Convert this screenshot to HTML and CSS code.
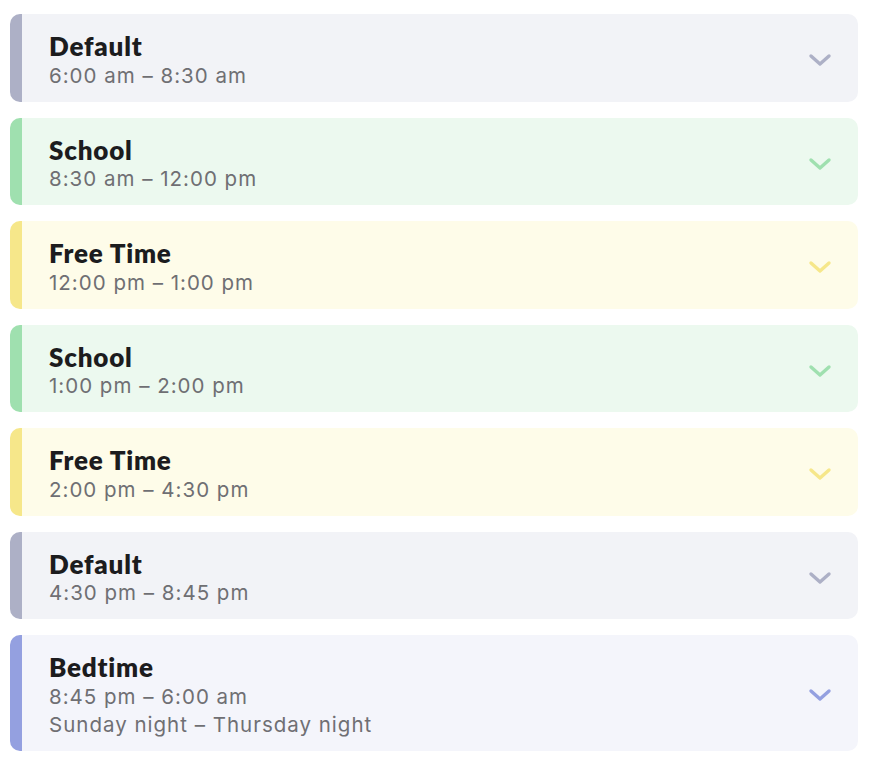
FILE: index.html
```html
<!DOCTYPE html>
<html lang="en">
<head>
  <meta charset="UTF-8">
  <meta name="viewport" content="width=device-width, initial-scale=1.0">
  <title>Schedule</title>
  <link rel="stylesheet" href="styles.css">
</head>
<body>
  <div class="schedule">
    <div class="block default">
      <div class="info">
        <div class="title">Default</div>
        <div class="time">6:00 am – 8:30 am</div>
      </div>
      <svg class="chevron" viewBox="0 0 24 14"><path d="M3 3 L12 11 L21 3"/></svg>
    </div>
    <div class="block school">
      <div class="info">
        <div class="title">School</div>
        <div class="time">8:30 am – 12:00 pm</div>
      </div>
      <svg class="chevron" viewBox="0 0 24 14"><path d="M3 3 L12 11 L21 3"/></svg>
    </div>
    <div class="block free">
      <div class="info">
        <div class="title">Free Time</div>
        <div class="time">12:00 pm – 1:00 pm</div>
      </div>
      <svg class="chevron" viewBox="0 0 24 14"><path d="M3 3 L12 11 L21 3"/></svg>
    </div>
    <div class="block school">
      <div class="info">
        <div class="title">School</div>
        <div class="time">1:00 pm – 2:00 pm</div>
      </div>
      <svg class="chevron" viewBox="0 0 24 14"><path d="M3 3 L12 11 L21 3"/></svg>
    </div>
    <div class="block free">
      <div class="info">
        <div class="title">Free Time</div>
        <div class="time">2:00 pm – 4:30 pm</div>
      </div>
      <svg class="chevron" viewBox="0 0 24 14"><path d="M3 3 L12 11 L21 3"/></svg>
    </div>
    <div class="block default">
      <div class="info">
        <div class="title">Default</div>
        <div class="time">4:30 pm – 8:45 pm</div>
      </div>
      <svg class="chevron" viewBox="0 0 24 14"><path d="M3 3 L12 11 L21 3"/></svg>
    </div>
    <div class="block bedtime">
      <div class="info">
        <div class="title">Bedtime</div>
        <div class="time">8:45 pm – 6:00 am</div>
        <div class="time">Sunday night – Thursday night</div>
      </div>
      <svg class="chevron" viewBox="0 0 24 14"><path d="M3 3 L12 11 L21 3"/></svg>
    </div>
  </div>
</body>
</html>
```

FILE: styles.css
```css
body {
  margin: 0;
  padding: 14px 12px 14px 10px;
  background: #fff;
  font-family: Inter, "Noto Sans", sans-serif;
}

.schedule {
  display: flex;
  flex-direction: column;
  gap: 16px;
}

.block {
  display: flex;
  align-items: center;
  justify-content: space-between;
  padding: 17px 26px 12px 27px;
  border-left: 12px solid;
  border-radius: 10px;
}

.title {
  font-family: Lato, sans-serif;
  font-weight: 800;
  font-size: 26px;
  line-height: 30.5px;
  letter-spacing: 0.8px;
  color: #1c1c1e;
}

.time {
  font-size: 20.5px;
  line-height: 28px;
  letter-spacing: 1px;
  color: #6f6f73;
}

.chevron {
  width: 24px;
  height: 14px;
  fill: none;
  stroke-width: 3.4;
  stroke-linecap: round;
  stroke-linejoin: round;
}

.default {
  background: #f2f3f7;
  border-color: #adb0c6;
}
.default .chevron { stroke: #adb0c6; }

.school {
  background: #ecf9ef;
  border-color: #9fe0af;
}
.school .chevron { stroke: #9fe0af; }

.free {
  background: #fefce9;
  border-color: #f6e78a;
}
.free .chevron { stroke: #f6e78a; }

.bedtime {
  background: #f4f5fb;
  border-color: #94a0e0;
}
.bedtime .chevron { stroke: #94a0e0; }
```
